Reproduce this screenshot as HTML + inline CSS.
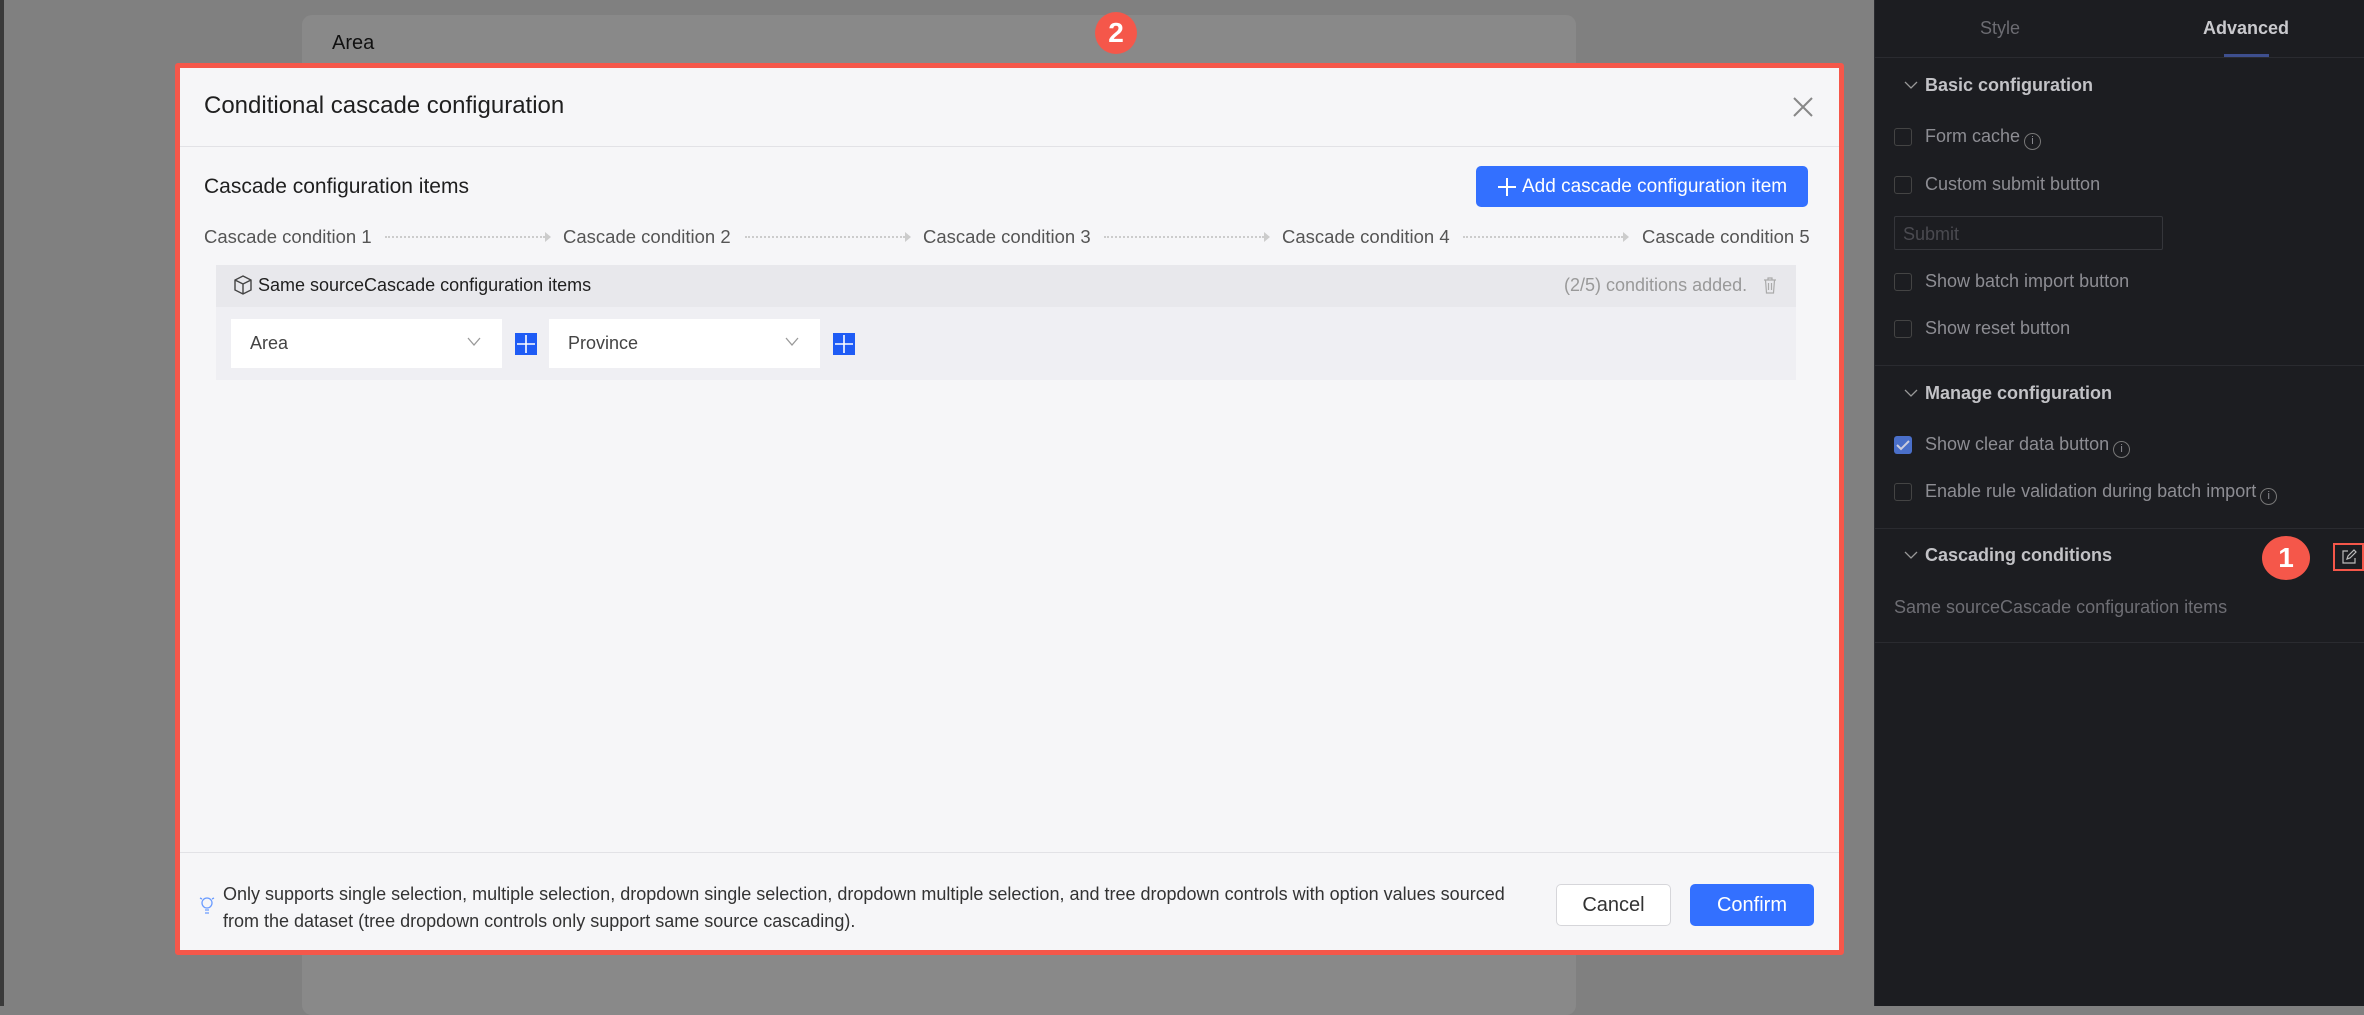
<!DOCTYPE html>
<html><head><meta charset="utf-8"><style>
*{box-sizing:border-box;margin:0;padding:0}
body{width:2364px;height:1006px;overflow:hidden;background:#808080;font-family:"Liberation Sans",Arial,sans-serif;position:relative}
.a{position:absolute}
.t{position:absolute;white-space:nowrap}
.i{display:inline-block;width:17px;height:17px;border:1px solid #777;border-radius:50%;font-size:11px;text-align:center;line-height:15px;vertical-align:-2px;margin-left:4px}
.cb{position:absolute;left:19px;width:18px;height:18px;border:1px solid #444;border-radius:3px}
</style></head><body>
<div class="a" style="left:0;top:0;width:4px;height:1006px;background:#3a3a3a"></div>
<div class="a" style="left:302px;top:15px;width:1274px;height:1000px;background:#898989;border-radius:10px"></div>
<div class="t" style="left:332px;top:32px;font-size:20px;color:#111">Area</div>
<!-- modal -->
<div class="a" style="left:175px;top:63px;width:1669px;height:892px;background:#f6f6f8;border:5px solid #f5574a;border-radius:3px"></div>
<div class="a" style="left:1095px;top:12px;width:42px;height:42px;border-radius:50%;background:#f5574a;color:#fff;font-size:28px;font-weight:bold;text-align:center;line-height:42px">2</div>
<div class="t" style="left:204px;top:92px;font-size:24px;color:#1f1f1f">Conditional cascade configuration</div>
<svg class="a" style="left:1793px;top:97px" width="20" height="20"><path d="M1 1L19 19M19 1L1 19" stroke="#888" stroke-width="2"/></svg>
<div class="a" style="left:180px;top:146px;width:1659px;height:1px;background:#e2e2e6"></div>
<div class="t" style="left:204px;top:175px;font-size:21px;color:#1f1f1f">Cascade configuration items</div>
<div class="a" style="left:1476px;top:166px;width:332px;height:41px;background:#3370ff;border-radius:5px;color:#fff;font-size:19px;line-height:41px;padding-left:46px">Add cascade configuration item</div>
<svg class="a" style="left:1497px;top:177px" width="20" height="20"><path d="M10 1V19M1 10H19" stroke="#fff" stroke-width="2"/></svg>
<div class="t" style="left:204px;top:226px;font-size:18.5px;color:#555">Cascade condition 1</div>
<div class="t" style="left:563px;top:226px;font-size:18.5px;color:#555">Cascade condition 2</div>
<div class="t" style="left:923px;top:226px;font-size:18.5px;color:#555">Cascade condition 3</div>
<div class="t" style="left:1282px;top:226px;font-size:18.5px;color:#555">Cascade condition 4</div>
<div class="t" style="left:1642px;top:226px;font-size:18.5px;color:#555">Cascade condition 5</div>
<div class="a" style="left:385px;top:236px;width:160px;border-top:2px dotted #ccc"></div>
<div class="a" style="left:745px;top:236px;width:160px;border-top:2px dotted #ccc"></div>
<div class="a" style="left:1104px;top:236px;width:160px;border-top:2px dotted #ccc"></div>
<div class="a" style="left:1463px;top:236px;width:160px;border-top:2px dotted #ccc"></div>
<div class="a" style="left:545px;top:232px;border-left:6px solid #ccc;border-top:5px solid transparent;border-bottom:5px solid transparent"></div>
<div class="a" style="left:905px;top:232px;border-left:6px solid #ccc;border-top:5px solid transparent;border-bottom:5px solid transparent"></div>
<div class="a" style="left:1264px;top:232px;border-left:6px solid #ccc;border-top:5px solid transparent;border-bottom:5px solid transparent"></div>
<div class="a" style="left:1623px;top:232px;border-left:6px solid #ccc;border-top:5px solid transparent;border-bottom:5px solid transparent"></div>
<div class="a" style="left:216px;top:265px;width:1580px;height:115px;background:#efeff3"></div>
<div class="a" style="left:216px;top:265px;width:1580px;height:42px;background:#e8e8ec"></div>
<svg class="a" style="left:234px;top:275px" width="18" height="20" viewBox="0 0 18 20"><path d="M9 1L17 5V15L9 19L1 15V5Z M1 5L9 9L17 5 M9 9V19" fill="none" stroke="#444" stroke-width="1.4"/></svg>
<div class="t" style="left:258px;top:275px;font-size:18px;color:#1f1f1f">Same sourceCascade configuration items</div>
<div class="t" style="left:1564px;top:275px;font-size:18px;color:#999">(2/5) conditions added.</div>
<svg class="a" style="left:1763px;top:277px" width="14" height="17"><path d="M1 3H13M5 3V1H9V3M2.5 3L3.5 16H10.5L11.5 3M5.5 6V13M8.5 6V13" fill="none" stroke="#aaa" stroke-width="1.2"/></svg>
<div class="a" style="left:231px;top:319px;width:271px;height:49px;background:#fff"></div>
<div class="t" style="left:250px;top:333px;font-size:18px;color:#444">Area</div>
<svg class="a" style="left:467px;top:337px" width="14" height="9"><path d="M1 1L7 8L13 1" fill="none" stroke="#999" stroke-width="1.3"/></svg>
<div class="a" style="left:515px;top:333px;width:22px;height:22px;background:#1f5cf5"></div>
<svg class="a" style="left:515px;top:333px" width="22" height="22"><path d="M11 2V20M2 11H20" stroke="#fff" stroke-width="1.6"/></svg>
<div class="a" style="left:549px;top:319px;width:271px;height:49px;background:#fff"></div>
<div class="t" style="left:568px;top:333px;font-size:18px;color:#444">Province</div>
<svg class="a" style="left:785px;top:337px" width="14" height="9"><path d="M1 1L7 8L13 1" fill="none" stroke="#999" stroke-width="1.3"/></svg>
<div class="a" style="left:833px;top:333px;width:22px;height:22px;background:#1f5cf5"></div>
<svg class="a" style="left:833px;top:333px" width="22" height="22"><path d="M11 2V20M2 11H20" stroke="#fff" stroke-width="1.6"/></svg>
<div class="a" style="left:180px;top:852px;width:1659px;height:1px;background:#e2e2e6"></div>
<svg class="a" style="left:199px;top:895px" width="16" height="20"><circle cx="8" cy="8" r="5" fill="none" stroke="#6b9cff" stroke-width="1.3"/><path d="M6 15H10M6 18H10M1 3L3 4M15 3L13 4" stroke="#6b9cff" stroke-width="1.3"/></svg>
<div class="t" style="left:223px;top:881px;font-size:18px;color:#333;line-height:27px">Only supports single selection, multiple selection, dropdown single selection, dropdown multiple selection, and tree dropdown controls with option values sourced<br>from the dataset (tree dropdown controls only support same source cascading).</div>
<div class="a" style="left:1556px;top:884px;width:115px;height:42px;background:#fff;border:1px solid #d6d6da;border-radius:5px;text-align:center;line-height:40px;font-size:20px;color:#333">Cancel</div>
<div class="a" style="left:1690px;top:884px;width:124px;height:42px;background:#3370ff;border-radius:5px;text-align:center;line-height:42px;font-size:20px;color:#fff">Confirm</div>
<!-- right panel -->
<div class="a" style="left:1874px;top:0;width:490px;height:1006px;background:#1c1d21;border-left:1px solid #2a2b30"></div>
<div class="t" style="left:1980px;top:18px;font-size:18px;color:#6c6c72">Style</div>
<div class="t" style="left:2203px;top:18px;font-size:18px;font-weight:bold;color:#c9c9cd">Advanced</div>
<div class="a" style="left:2224px;top:54px;width:45px;height:3px;background:#3e4f8e"></div>
<div class="a" style="left:1875px;top:57px;width:489px;height:1px;background:#2a2b30"></div>
<div style="position:absolute;left:1875px;top:0;width:489px;font-size:18px;color:#8d8d93">
<svg class="a" style="left:29px;top:81px" width="14" height="9"><path d="M1 1L7 7L13 1" fill="none" stroke="#999" stroke-width="1.3"/></svg>
<div class="t" style="left:50px;top:75px;font-weight:bold;color:#c2c2c6">Basic configuration</div>
<div class="cb" style="top:128px"></div>
<div class="t" style="left:50px;top:126px">Form cache<span class="i">i</span></div>
<div class="cb" style="top:176px"></div>
<div class="t" style="left:50px;top:174px">Custom submit button</div>
<div class="a" style="left:19px;top:216px;width:269px;height:34px;border:1px solid #35363b;border-radius:2px"></div>
<div class="t" style="left:28px;top:224px;color:#4a4a50">Submit</div>
<div class="cb" style="top:273px"></div>
<div class="t" style="left:50px;top:271px">Show batch import button</div>
<div class="cb" style="top:320px"></div>
<div class="t" style="left:50px;top:318px">Show reset button</div>
<div class="a" style="left:0;top:365px;width:489px;height:1px;background:#2a2b30"></div>
<svg class="a" style="left:29px;top:389px" width="14" height="9"><path d="M1 1L7 7L13 1" fill="none" stroke="#999" stroke-width="1.3"/></svg>
<div class="t" style="left:50px;top:383px;font-weight:bold;color:#c2c2c6">Manage configuration</div>
<div class="a" style="left:19px;top:436px;width:18px;height:18px;background:#4a6fc9;border-radius:3px"></div>
<svg class="a" style="left:21px;top:439px" width="14" height="12"><path d="M1 6L5 10L13 2" fill="none" stroke="#ccd" stroke-width="2"/></svg>
<div class="t" style="left:50px;top:434px">Show clear data button<span class="i">i</span></div>
<div class="cb" style="top:483px"></div>
<div class="t" style="left:50px;top:481px">Enable rule validation during batch import<span class="i">i</span></div>
<div class="a" style="left:0;top:528px;width:489px;height:1px;background:#2a2b30"></div>
<svg class="a" style="left:29px;top:551px" width="14" height="9"><path d="M1 1L7 7L13 1" fill="none" stroke="#999" stroke-width="1.3"/></svg>
<div class="t" style="left:50px;top:545px;font-weight:bold;color:#c2c2c6">Cascading conditions</div>
<div class="a" style="left:387px;top:536px;width:48px;height:44px;border-radius:50%;background:#f5574a;color:#fff;font-size:28px;font-weight:bold;text-align:center;line-height:44px">1</div>
<div class="a" style="left:458px;top:543px;width:31px;height:28px;border:2px solid #f5574a"></div>
<svg class="a" style="left:466px;top:549px" width="16" height="16"><path d="M7 2H2V14H14V9M6 10L7 7L13 1L15 3L9 9Z" fill="none" stroke="#bbb" stroke-width="1.2"/></svg>
<div class="t" style="left:19px;top:597px;color:#6e6e74">Same sourceCascade configuration items</div>
<div class="a" style="left:0;top:642px;width:489px;height:1px;background:#2a2b30"></div>
</div>
</body></html>
